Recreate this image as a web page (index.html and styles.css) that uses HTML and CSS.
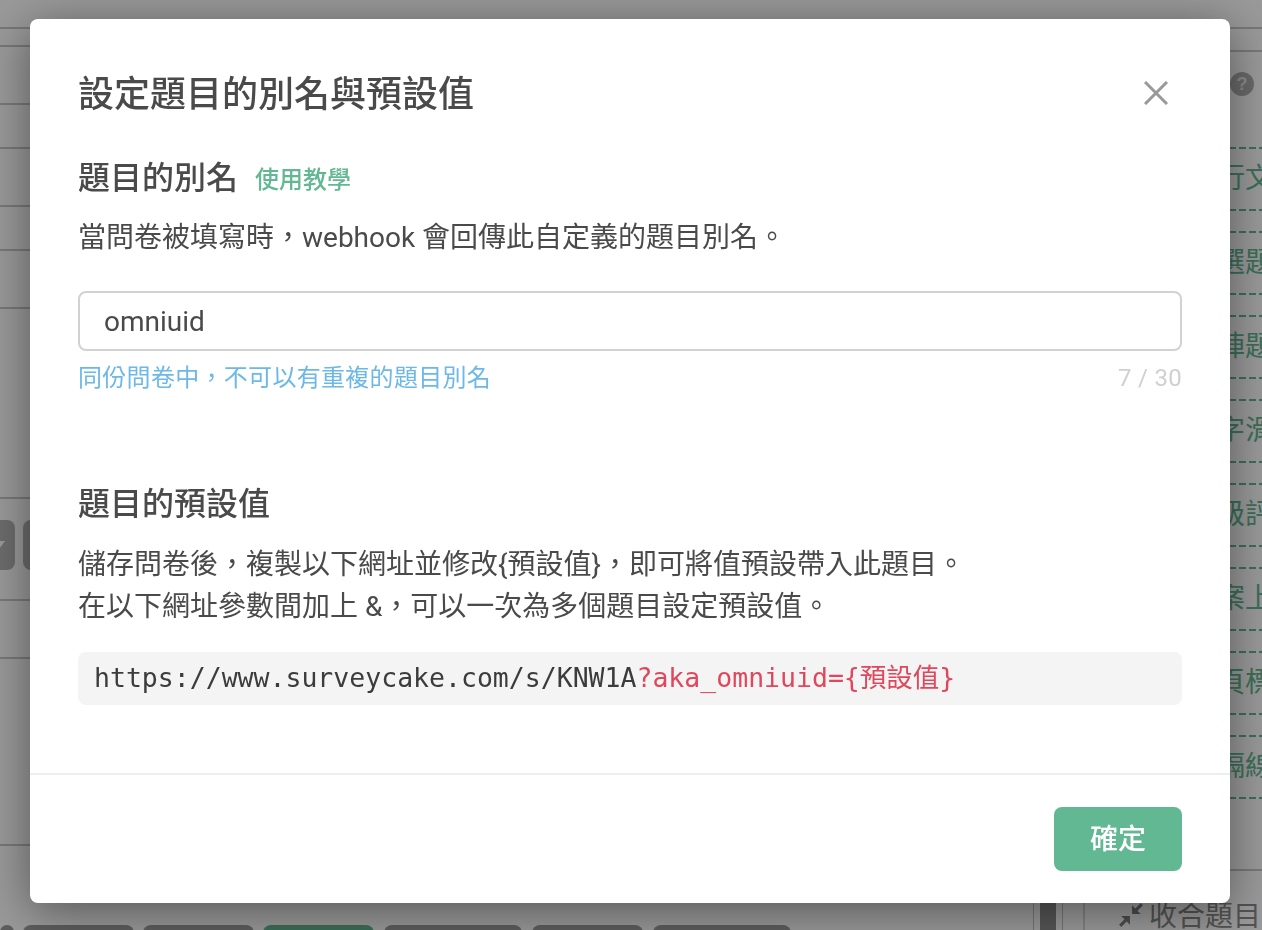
FILE: index.html
```html
<!DOCTYPE html>
<html lang="zh-Hant">
<head>
  <title>設定題目的別名與預設值</title>
  <link rel="stylesheet" href="styles.css">
</head>
<body>
  <div class="page">
    <div class="main">
      <div class="top-bar"></div>
      <div class="row" style="height:18px"></div>
      <div class="row" style="height:58px"></div>
      <div class="row" style="height:44px"></div>
      <div class="row" style="height:58px"></div>
      <div class="row" style="height:44px"></div>
      <div class="row" style="height:58px"></div>
      <div class="row" style="height:190px"></div>
      <div class="row tools" style="height:102px">
        <div class="tool-group">
          <span class="tool-btn first"><span class="arrow"></span></span>
          <span class="tool-btn"></span>
        </div>
      </div>
      <div class="row" style="height:58px"></div>
      <div class="row" style="height:187px"></div>
      <div class="tabs">
        <span class="tab stub"></span>
        <span class="tab"></span>
        <span class="tab"></span>
        <span class="tab active"></span>
        <span class="tab wide"></span>
        <span class="tab"></span>
        <span class="tab wide"></span>
      </div>
      <div class="scroller"><span class="thumb"></span></div>
    </div>
    <div class="side">
      <div class="side-top"></div>
      <div class="side-sub"></div>
      <div class="side-head">
        <span class="help">?</span>
      </div>
      <div class="side-list">
        <div class="field-item">單行文字</div>
        <div class="field-item">單選題</div>
        <div class="field-item">矩陣題</div>
        <div class="field-item">數字滑桿</div>
        <div class="field-item">分級評分</div>
        <div class="field-item">檔案上傳</div>
        <div class="field-item">分頁標題</div>
        <div class="field-item">分隔線</div>
      </div>
      <div class="collapse">
        <svg width="26" height="26" viewBox="0 0 24 24"><path d="M11 13v8l-3-3-5 5-2-2 5-5-3-3zM13 11V3l3 3 5-5 2 2-5 5 3 3z" fill="#808080"/></svg>
        <span>收合題目</span>
      </div>
    </div>
  </div>

  <div class="backdrop">
    <div class="modal">
      <div class="modal-body">
        <div class="modal-head">
          <h1>設定題目的別名與預設值</h1>
          <svg class="close" width="24" height="24" viewBox="0 0 24 24"><path d="M1 1l22 22M23 1L1 23" stroke="#999" stroke-width="3" fill="none"/></svg>
        </div>

        <div class="section-title">
          <h2>題目的別名</h2>
          <a class="tutorial">使用教學</a>
        </div>
        <p class="desc">當問卷被填寫時，webhook 會回傳此自定義的題目別名。</p>
        <input class="alias-input" type="text" value="omniuid">
        <div class="hint-row">
          <span class="hint">同份問卷中，不可以有重複的題目別名</span>
          <span class="count">7 / 30</span>
        </div>

        <div class="section-title second">
          <h2>題目的預設值</h2>
        </div>
        <p class="desc">儲存問卷後，複製以下網址並修改{預設值}，即可將值預設帶入此題目。<br>在以下網址參數間加上 &amp;，可以一次為多個題目設定預設值。</p>
        <div class="code-box">https://www.surveycake.com/s/KNW1A<span class="param">?aka_omniuid={預設值}</span></div>
      </div>
      <div class="modal-foot">
        <button class="ok-btn">確定</button>
      </div>
    </div>
  </div>
</body>
</html>
```

FILE: styles.css
```css
* {
  box-sizing: border-box;
}
html, body {
  margin: 0;
  height: 100%;
  overflow: hidden;
}
body {
  font-family: Roboto, "Noto Sans CJK TC", sans-serif;
  color: #4a4a4a;
  background: #fff;
  text-spacing-trim: space-all;
}

/* page behind the dialog */
.page {
  display: flex;
  height: 930px;
  overflow: hidden;
}
.main {
  position: relative;
  flex: none;
  width: 1083px;
  display: flex;
  flex-direction: column;
}
.top-bar {
  height: 29px;
  border-bottom: 2px solid #c8c8c8;
}
.row {
  border-bottom: 2px solid #c8c8c8;
}
.tools {
  display: flex;
  align-items: center;
}
.tool-group {
  display: flex;
  gap: 8px;
  margin-top: -8px;
}
.tool-btn {
  width: 50px;
  height: 50px;
  background: #b4b4b4;
  border-radius: 8px;
}
.tool-btn.first {
  margin-left: -35px;
  display: flex;
  align-items: center;
  justify-content: flex-end;
}
.arrow {
  width: 0;
  height: 0;
  margin: 0 10px 0 0;
  border-top: 8px solid #fff;
  border-right: 6px solid transparent;
}
.tabs {
  margin-top: auto;
  height: 5px;
  display: flex;
  gap: 9px;
  overflow: hidden;
}
.tab {
  flex: none;
  width: 111px;
  height: 12px;
  background: #9b9b9b;
  border-radius: 8px 8px 0 0;
}
.tab.stub {
  width: 14px;
}
.tab.wide {
  width: 138px;
  margin: 0 1px;
}
.tab.active {
  background: #63b894;
}
.scroller {
  position: absolute;
  left: 1033px;
  top: 885px;
  width: 30px;
  height: 45px;
  border-left: 1px solid #c0c0c0;
  border-right: 1px solid #c0c0c0;
  padding-left: 6px;
}
.thumb {
  display: block;
  width: 16px;
  height: 45px;
  background: #8f8f8f;
}
.side {
  flex: 1;
  min-width: 0;
  display: flex;
  flex-direction: column;
}
.side > * {
  flex: none;
}
.side-top {
  height: 29px;
  border-bottom: 2px solid #c8c8c8;
}
.side-sub {
  height: 23px;
  border-bottom: 2px solid #c8c8c8;
}
.side-head {
  height: 95px;
  padding: 20px 0 0 147px;
}
.help {
  display: block;
  width: 24px;
  height: 24px;
  border-radius: 50%;
  background: #b0b0b0;
  color: #e8e8e8;
  font: bold 18px/24px "Liberation Sans", sans-serif;
  text-align: center;
}
.side-list {
  display: flex;
  flex-direction: column;
  gap: 20px;
  padding-left: 106px;
}
.field-item {
  height: 64px;
  color: #63b894;
  font-size: 28px;
  line-height: 64px;
  white-space: nowrap;
  background:
    repeating-linear-gradient(90deg, #63b894 0 7px, transparent 7px 10px) top / 100% 2px no-repeat,
    repeating-linear-gradient(90deg, #63b894 0 7px, transparent 7px 10px) bottom / 100% 2px no-repeat;
}
.collapse {
  margin-top: 70px;
  padding: 26px 0 0 33px;
  border-top: 2px solid #c8c8c8;
  border-left: 2px solid #d8d8d8;
  display: flex;
  align-items: flex-start;
  gap: 5px;
  color: #8a8a8a;
  font-size: 28px;
  line-height: 40px;
  white-space: nowrap;
}
.collapse svg {
  flex: none;
  margin-top: 5px;
}

/* dialog */
.backdrop {
  position: fixed;
  inset: 0;
  background: rgba(0, 0, 0, 0.4);
  padding: 19px 32px 27px 30px;
}
.modal {
  height: 884px;
  background: #fff;
  border-radius: 8px;
  box-shadow: 0 8px 48px rgba(0, 0, 0, 0.45);
  display: flex;
  flex-direction: column;
}
.modal-body {
  flex: 1;
  padding: 49px 48px 0;
}
.modal-head {
  display: flex;
  justify-content: space-between;
  align-items: center;
  height: 50px;
  margin-bottom: 37px;
}
.modal-head h1 {
  margin: 0;
  padding-top: 4px;
  font-size: 36px;
  font-weight: 500;
  line-height: 50px;
}
.close {
  margin-right: 14px;
}
.section-title {
  display: flex;
  align-items: center;
  gap: 17px;
  height: 44px;
}
.section-title.second {
  margin-top: 87px;
}
.section-title h2 {
  margin: 0;
  padding-top: 2px;
  font-size: 32px;
  font-weight: 500;
  line-height: 44px;
}
.section-title.second h2 {
  padding-top: 0;
}
.tutorial {
  color: #63b894;
  font-size: 24px;
  font-weight: 500;
}
.desc {
  margin: 16px 0 0;
  padding-top: 2px;
  font-size: 28px;
  line-height: 42px;
}
.alias-input {
  display: block;
  width: 100%;
  height: 60px;
  margin-top: 32px;
  padding: 0 24px;
  border: 2px solid #d2d2d2;
  border-radius: 8px;
  font: 28px Roboto, sans-serif;
  color: #4a4a4a;
  outline: none;
}
.hint-row {
  display: flex;
  justify-content: space-between;
  margin-top: 10px;
  font-size: 24px;
  line-height: 34px;
  letter-spacing: 0.3px;
}
.hint {
  color: #6cb8e6;
}
.count {
  color: #d0d0d0;
}
.code-box {
  height: 53px;
  margin-top: 24px;
  padding-left: 16px;
  background: #f4f4f4;
  border-radius: 8px;
  font-family: "DejaVu Sans Mono", "Noto Sans CJK TC", monospace;
  font-size: 26.5px;
  line-height: 52px;
  color: #3c3c3c;
  white-space: nowrap;
}
.param {
  color: #e0475c;
}
.modal-foot {
  height: 130px;
  padding: 32px 48px;
  border-top: 2px solid #eee;
  display: flex;
  justify-content: flex-end;
}
.ok-btn {
  width: 128px;
  height: 64px;
  padding: 0 0 4px;
  background: #63b894;
  color: #fff;
  border: none;
  border-radius: 8px;
  font-family: "Noto Sans CJK TC", sans-serif;
  font-size: 28px;
  font-weight: 500;
}
```
